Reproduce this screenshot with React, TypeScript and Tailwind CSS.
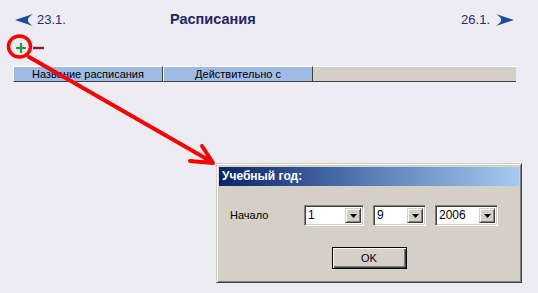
import React from "react";

const ArrowLeft = () => (
  <svg width="18" height="12" viewBox="0 0 18 12" className="block">
    <path d="M0 6 L18 0 Q12 4 13 6 Q12 8 18 12 Z" fill="#1d4c9c" />
  </svg>
);

const ArrowRight = () => (
  <svg width="18" height="12" viewBox="0 0 18 12" className="block">
    <path d="M18 6 L0 0 Q6 4 5 6 Q6 8 0 12 Z" fill="#1d4c9c" />
  </svg>
);

const Combo = ({ value, w }: { value: string; w: string }) => (
  <div className={`${w} h-[21px] flex border border-t-[#808080] border-l-[#808080] border-b-white border-r-white shadow-[inset_1px_1px_0_#404040,inset_-1px_-1px_0_#d4d0c8] p-[2px] bg-white`}>
    <span className="flex-1 pl-[1px] text-[12px] leading-[15px] text-black">{value}</span>
    <span className="w-[16px] h-[15px] flex items-center justify-center bg-[#d4d0c8] border border-t-[#d4d0c8] border-l-[#d4d0c8] border-b-[#404040] border-r-[#404040] shadow-[inset_1px_1px_0_#fff,inset_-1px_-1px_0_#808080]">
      <svg width="7" height="4" viewBox="0 0 7 4"><path d="M0 0 H7 L3.5 4 Z" fill="#000" /></svg>
    </span>
  </div>
);

export default function App() {
  return (
    <div className="relative w-[538px] h-[293px] overflow-hidden bg-[#ececf2] font-['Liberation_Sans',Arial,sans-serif]">
      {/* шапка */}
      <div className="flex items-center h-[16px] mt-[12px] pl-[15px] pr-[24px]">
        <div className="flex items-center gap-[4px] text-[13px] text-[#2b2b72]">
          <ArrowLeft />
          <span>23.1.</span>
        </div>
        <h1 className="ml-[104px] text-[14.5px] font-bold text-[#25256a]">Расписания</h1>
        <div className="ml-auto flex items-center gap-[6px] text-[13px] text-[#2b2b72]">
          <span>26.1.</span>
          <ArrowRight />
        </div>
      </div>

      {/* добавить / удалить */}
      <div className="flex items-center h-[14px] mt-[13px] pl-[15px] gap-[6px]">
        <svg width="12" height="12" viewBox="0 0 12 12" className="block">
          <path d="M6 1 V11 M1 6 H11" stroke="#2a9a3e" strokeWidth="2.2" />
        </svg>
        <svg width="11" height="4" viewBox="0 0 11 4" className="block">
          <path d="M0 2 H11" stroke="#8c1c30" strokeWidth="2.4" />
        </svg>
      </div>

      {/* заголовок таблицы */}
      <div className="flex ml-[13px] mr-[22px] mt-[11px] h-[16px] text-[11px] leading-[14px] text-black">
        <div className="w-[150px] text-center bg-[#9fbae3] border-t border-l border-t-white border-l-white border-b border-r border-b-[#404040] border-r-[#404040]">
          Название расписания
        </div>
        <div className="w-[150px] text-center bg-[#9fbae3] border-t border-l border-t-white border-l-white border-b border-r border-b-[#404040] border-r-[#404040]">
          Действительно с
        </div>
        <div className="flex-1 bg-[#d4d0c8] border-t border-t-white border-b border-b-[#404040]" />
      </div>

      {/* диалог */}
      <div className="absolute left-[216px] top-[163px] w-[306px] h-[120px] bg-[#d4d0c8] border border-t-[#d4d0c8] border-l-[#d4d0c8] border-b-[#404040] border-r-[#404040] shadow-[inset_1px_1px_0_#fff,inset_-1px_-1px_0_#808080] px-[2px] pt-[3px]">
        <div className="h-[19px] bg-gradient-to-r from-[#0a246a] via-[#5a7db5] to-[#a6caf0] pl-[3px] text-[12px] leading-[19px] font-bold text-white">
          Учебный год:
        </div>
        <div className="flex items-center mt-[19px] pl-[11px]">
          <span className="w-[74px] text-[11px] text-black">Начало</span>
          <div className="flex gap-[9px]">
            <Combo value="1" w="w-[60px]" />
            <Combo value="9" w="w-[53px]" />
            <Combo value="2006" w="w-[63px]" />
          </div>
        </div>
        <div className="flex justify-center mt-[21px]">
          <button className="w-[75px] h-[22px] border border-black bg-[#d4d0c8] shadow-[inset_1px_1px_0_#fff,inset_-1px_-1px_0_#404040,inset_-2px_-2px_0_#808080] text-[11px] text-black">
            OK
          </button>
        </div>
      </div>

      {/* красная пометка */}
      <svg className="absolute inset-0 pointer-events-none" width="538" height="293" viewBox="0 0 538 293">
        <ellipse cx="19.5" cy="46.5" rx="11" ry="10.5" fill="none" stroke="#ff0000" strokeWidth="3.5" />
        <path d="M29 57 L212 162 M202 146 L213 163 M190 161 L213 163" fill="none" stroke="#ff0000" strokeWidth="4" strokeLinecap="round" />
      </svg>
    </div>
  );
}
